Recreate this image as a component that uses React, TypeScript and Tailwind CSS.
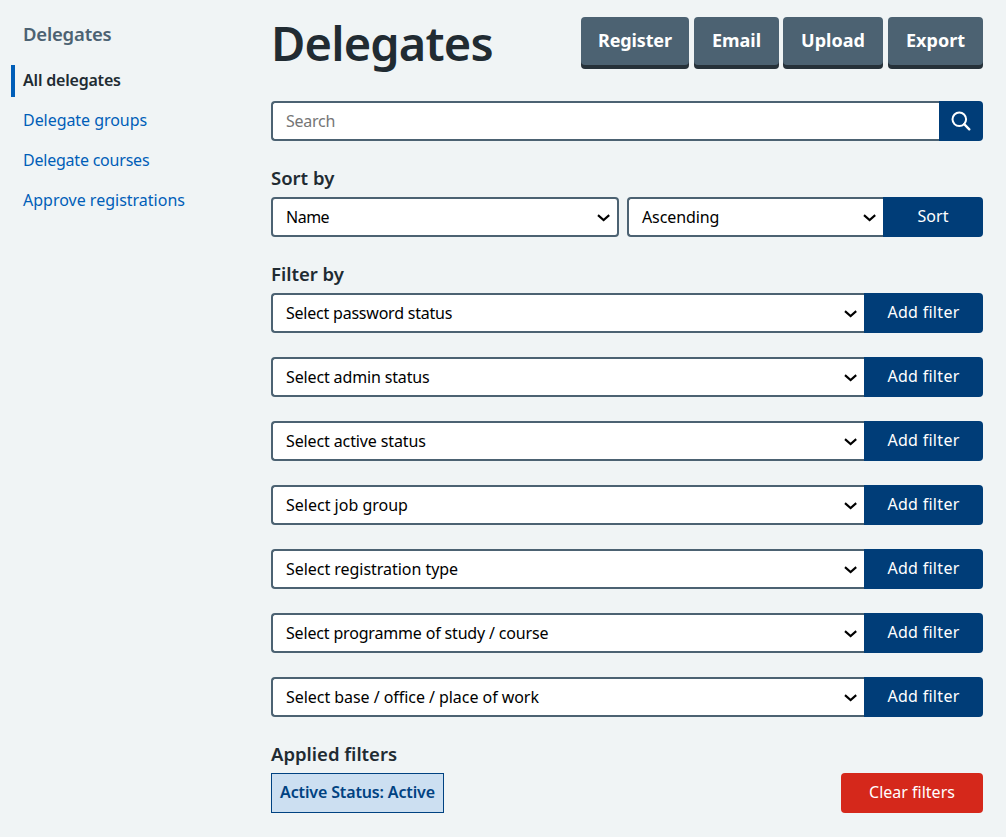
import type { ReactNode } from 'react';

const filters = [
  { label: 'Select password status', tracking: 'tracking-[-0.22px]' },
  { label: 'Select admin status', tracking: 'tracking-[-0.14px]' },
  { label: 'Select active status', tracking: 'tracking-[-0.12px]' },
  { label: 'Select job group', tracking: 'tracking-normal' },
  { label: 'Select registration type', tracking: 'tracking-[-0.04px]' },
  { label: 'Select programme of study / course', tracking: 'tracking-[-0.17px]' },
  { label: 'Select base / office / place of work', tracking: 'tracking-[-0.05px]' },
];

const navLinks = [
  { label: 'Delegate groups', tracking: 'tracking-[-0.05px]' },
  { label: 'Delegate courses', tracking: 'tracking-[-0.22px]' },
  { label: 'Approve registrations', tracking: 'tracking-normal' },
];

function Chevron() {
  return (
    <svg width="14" height="10" viewBox="0 0 14 10" fill="none" stroke="#000" strokeWidth="2.1" className="shrink-0">
      <path d="M2 3.1 L7.6 8 L13.2 3.1" />
    </svg>
  );
}

function SelectBox({ label, tracking, className }: { label: string; tracking: string; className: string }) {
  return (
    <div
      role="combobox"
      className={`flex h-10 items-center justify-between border-2 border-[#4c6272] bg-white pl-[13px] text-black ${className}`}
    >
      <span className={`leading-6 whitespace-nowrap ${tracking}`}>{label}</span>
      <Chevron />
    </div>
  );
}

function BlueButton({ children, className }: { children: ReactNode; className: string }) {
  return (
    <button className={`h-10 shrink-0 rounded-r bg-[#003d78] pb-0.5 text-white ${className}`}>{children}</button>
  );
}

function TopButton({ label, className }: { label: string; className: string }) {
  return (
    <button
      className={`h-12 rounded bg-[#4c6272] pb-0.5 text-lg font-bold text-white shadow-[0_4px_0_#263139] ${className}`}
    >
      {label}
    </button>
  );
}

function Heading({ children }: { children: ReactNode }) {
  return <h2 className="h-7 text-[18.5px] leading-[26px] font-semibold whitespace-nowrap">{children}</h2>;
}

export default function App() {
  return (
    <div className="flex h-[837px] w-[1006px] overflow-hidden bg-[#f0f4f5] font-['Noto_Sans',sans-serif] text-base text-[#212b32]">
      <nav className="w-[271px] shrink-0 pt-5 pl-[11px]">
        <h2 className="h-7 pl-3 text-[18.5px] leading-7 font-semibold tracking-[-0.2px] text-[#4c6272]">Delegates</h2>
        <ul className="mt-[17px] flex flex-col gap-2">
          <li className="h-8 border-l-4 border-[#005eb8] pl-2 leading-[30px] font-semibold tracking-[-0.2px]">
            All delegates
          </li>
          {navLinks.map(({ label, tracking }) => (
            <li key={label} className={`h-8 pl-3 leading-[30px] text-[#005eb8] ${tracking}`}>
              <a>{label}</a>
            </li>
          ))}
        </ul>
      </nav>
      <main className="w-[712px] shrink-0 pt-[17px]">
        <header className="flex h-[84px] justify-between">
          <h1 className="text-[47px] leading-[53px] font-[650] tracking-[-0.85px]">Delegates</h1>
          <div className="flex">
            <TopButton label="Register" className="w-[108px] tracking-[-0.15px]" />
            <TopButton label="Email" className="ml-[5px] w-[85px]" />
            <TopButton label="Upload" className="ml-1 w-[100px]" />
            <TopButton label="Export" className="ml-[5px] w-[95px]" />
          </div>
        </header>
        <div className="flex h-10">
          <div className="grow rounded-l border-2 border-r-0 border-[#4c6272] bg-white pl-[13px] leading-9 tracking-[-0.25px] text-[#757575]">
            Search
          </div>
          <button className="flex w-11 items-center justify-center rounded-r bg-[#003d78]">
            <svg width="22" height="22" viewBox="0 0 22 22" fill="none" stroke="#fff" strokeWidth="2" strokeLinecap="round">
              <circle cx="9.3" cy="9.3" r="6.8" />
              <path d="M14.2 14.2 L19.3 19.3" strokeWidth="2.4" />
            </svg>
          </button>
        </div>
        <section className="mt-6">
          <Heading>Sort by</Heading>
          <div className="mt-1 flex">
            <SelectBox label="Name" tracking="tracking-[-0.5px]" className="w-[348px] rounded pr-[7px]" />
            <SelectBox
              label="Ascending"
              tracking="tracking-[-0.1px]"
              className="ml-2 w-[256px] rounded-l border-r-0 pr-[7px]"
            />
            <BlueButton className="w-[100px]">Sort</BlueButton>
          </div>
        </section>
        <section className="mt-6">
          <Heading>Filter by</Heading>
          <div className="mt-1 flex flex-col gap-6">
            {filters.map(({ label, tracking }) => (
              <div key={label} className="flex">
                <SelectBox label={label} tracking={tracking} className="grow rounded-l border-r-0 pr-[7px]" />
                <BlueButton className="w-[119px] tracking-[0.3px]">Add filter</BlueButton>
              </div>
            ))}
          </div>
        </section>
        <section className="mt-6">
          <Heading>Applied filters</Heading>
          <div className="mt-1 flex justify-between">
            <div className="h-10 w-[173px] border border-[#004281] bg-[#ccdff1] text-center leading-9 font-semibold tracking-[-0.14px] whitespace-nowrap text-[#004281]">
              Active Status: Active
            </div>
            <button className="h-10 w-[142px] rounded bg-[#d5281b] pb-0.5 text-white">Clear filters</button>
          </div>
        </section>
      </main>
    </div>
  );
}
